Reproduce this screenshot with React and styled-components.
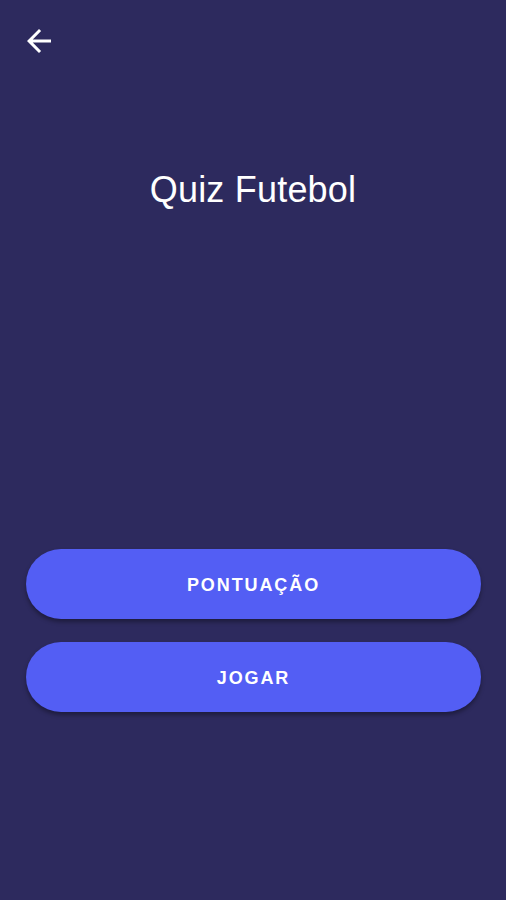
import React from "react";
import styled, { createGlobalStyle } from "styled-components";

const Global = createGlobalStyle`
  html, body { margin: 0; padding: 0; background: #2d2a5e; }
  * { box-sizing: border-box; }
`;

const Screen = styled.div`
  width: 506px;
  height: 900px;
  background: #2d2a5e;
  display: flex;
  flex-direction: column;
  font-family: "Liberation Sans", Arial, sans-serif;
  color: #ffffff;
`;

const TopBar = styled.div`
  height: 64px;
  padding: 23px 0 0 21px;
`;

const BackButton = styled.button`
  width: 36px;
  height: 36px;
  padding: 0;
  border: 0;
  background: transparent;
  display: block;
  cursor: pointer;
`;

const Title = styled.h1`
  margin: 107px 0 0;
  font-size: 36px;
  font-weight: 400;
  text-align: center;
  line-height: 38px;
  letter-spacing: 0.2px;
`;

const Actions = styled.div`
  margin-top: 340px;
  padding: 0 25px 0 26px;
  display: flex;
  flex-direction: column;
  gap: 23px;
`;

const PillButton = styled.button`
  height: 70px;
  border: 0;
  border-radius: 35px;
  background: #535ef4;
  color: #ffffff;
  font-family: "Liberation Sans", Arial, sans-serif;
  font-weight: 700;
  font-size: 18px;
  letter-spacing: 1.9px;
  padding: 2px 0 0;
  box-shadow: 0 3px 4px rgba(0, 0, 0, 0.35);
  cursor: pointer;
`;

export default function App() {
  return (
    <>
      <Global />
      <Screen>
        <TopBar>
          <BackButton aria-label="Voltar">
            <svg width="36" height="36" viewBox="0 0 24 24" fill="#ffffff">
              <path d="M20 11H7.83l5.59-5.59L12 4l-8 8 8 8 1.41-1.41L7.83 13H20v-2z" />
            </svg>
          </BackButton>
        </TopBar>
        <Title>Quiz Futebol</Title>
        <Actions>
          <PillButton>PONTUAÇÃO</PillButton>
          <PillButton>JOGAR</PillButton>
        </Actions>
      </Screen>
    </>
  );
}
